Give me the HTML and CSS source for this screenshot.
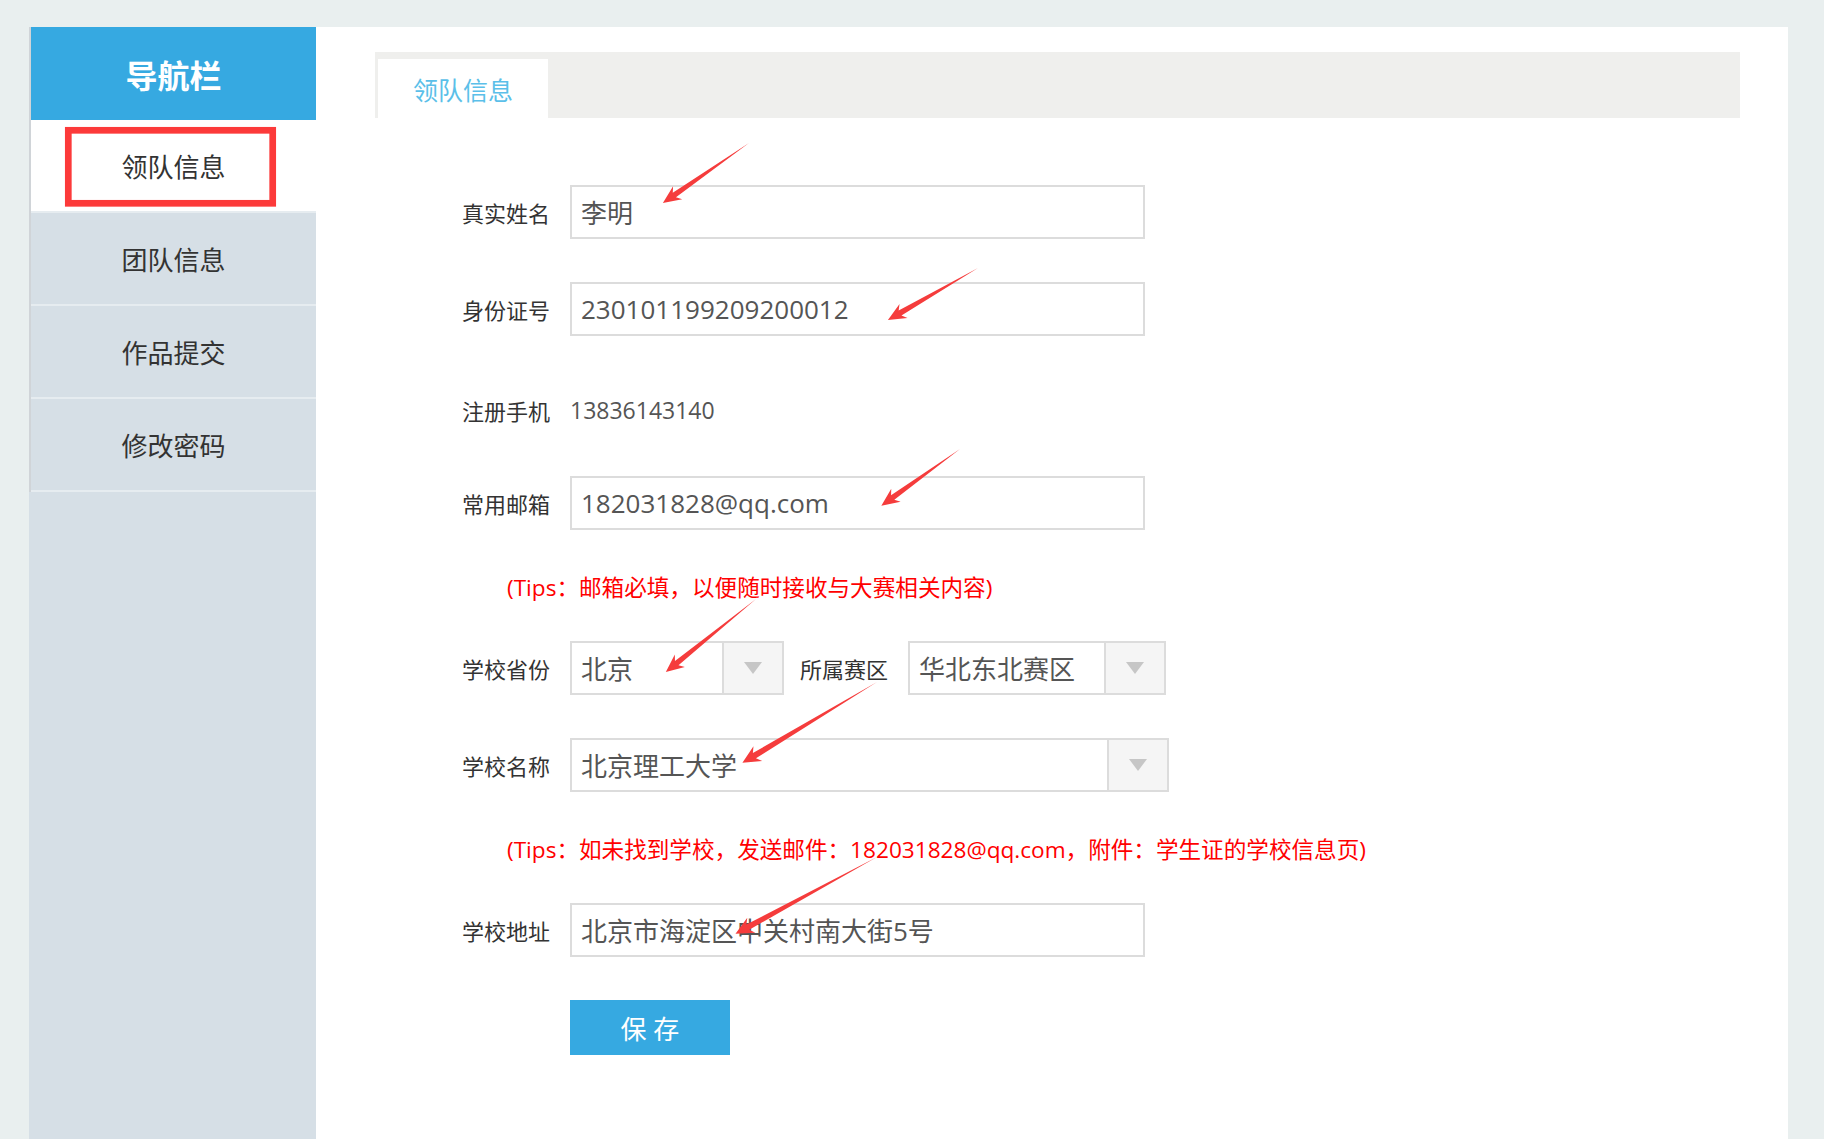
FILE: index.html
```html
<!DOCTYPE html>
<html lang="zh-CN">
<head>
    <meta charset="UTF-8">
    <title>领队信息</title>
    <link rel="stylesheet" href="styles.css">
</head>
<body>
    <div class="page">
        <div class="sidebar">
            <div class="nav">
                <div class="nav-head">导航栏</div>
                <div class="nav-item active">领队信息</div>
                <div class="nav-item">团队信息</div>
                <div class="nav-item">作品提交</div>
                <div class="nav-item">修改密码</div>
            </div>
        </div>

        <div class="main">
            <div class="tabs">
                <div class="tab">领队信息</div>
            </div>

            <div class="form">
                <div class="row">
                    <span class="label">真实姓名</span>
                    <input class="text-input" type="text" value="李明">
                </div>
                <div class="row">
                    <span class="label">身份证号</span>
                    <input class="text-input" type="text" value="230101199209200012">
                </div>
                <div class="row row-static">
                    <span class="label">注册手机</span>
                    <span class="plain">13836143140</span>
                </div>
                <div class="row">
                    <span class="label">常用邮箱</span>
                    <input class="text-input" type="text" value="182031828@qq.com">
                </div>
                <div class="tips">(Tips：邮箱必填，以便随时接收与大赛相关内容)</div>
                <div class="row">
                    <span class="label">学校省份</span>
                    <div class="select province">
                        <span class="select-value">北京</span>
                        <span class="select-btn"><i class="arrow-down"></i></span>
                    </div>
                    <span class="label zone-label">所属赛区</span>
                    <div class="select zone">
                        <span class="select-value">华北东北赛区</span>
                        <span class="select-btn"><i class="arrow-down"></i></span>
                    </div>
                </div>
                <div class="row">
                    <span class="label">学校名称</span>
                    <div class="select school">
                        <span class="select-value">北京理工大学</span>
                        <span class="select-btn"><i class="arrow-down"></i></span>
                    </div>
                </div>
                <div class="tips">(Tips：如未找到学校，发送邮件：182031828@qq.com，附件：学生证的学校信息页)</div>
                <div class="row">
                    <span class="label">学校地址</span>
                    <input class="text-input" type="text" value="北京市海淀区中关村南大街5号">
                </div>
                <button class="save-btn">保 存</button>
            </div>
        </div>
    </div>

    <!-- 标注：红框和箭头 -->
    <svg class="marks" width="1824" height="1139" viewBox="0 0 1824 1139">
        <rect x="68.3" y="130.3" width="204.4" height="73" fill="none" stroke="#fc3a3a" stroke-width="6.7"/>
        <g fill="#f53c3c">
            <polygon transform="translate(749,143) rotate(145.1)" points="0,0 91,-2.8 87,-8 105,0 87,8 91,2.8"/>
            <polygon transform="translate(978,268) rotate(150)" points="0,0 90,-2.8 86,-8 104,0 86,8 90,2.8"/>
            <polygon transform="translate(960,449) rotate(144.2)" points="0,0 83,-2.8 79,-8 97,0 79,8 83,2.8"/>
            <polygon transform="translate(756,599) rotate(141)" points="0,0 102,-2.8 98,-8 116,0 98,8 102,2.8"/>
            <polygon transform="translate(877,682) rotate(149)" points="0,0 143,-3 139,-8.5 157,0 139,8.5 143,3"/>
            <polygon transform="translate(877,857) rotate(151.5)" points="0,0 147,-3 143,-8.5 161,0 143,8.5 147,3"/>
        </g>
    </svg>
</body>
</html>
```

FILE: styles.css
```css
body {
    margin: 0;
    background-color: #e9efef;
    font-family: "Open Sans", "Noto Sans CJK SC", sans-serif;
    position: relative;
    overflow: hidden;
}

.page {
    display: flex;
    margin: 27px 36px 0 29px;
    height: 1112px;
}

.sidebar {
    width: 287px;
    flex-shrink: 0;
    background-color: #d6dfe6;
}

.nav {
    border-left: 2px solid #d0d4d8;
}

.nav-head {
    height: 93px;
    background-color: #36a9e1;
    color: white;
    font-size: 32px;
    font-weight: bold;
    display: flex;
    align-items: center;
    justify-content: center;
}

.nav-item {
    height: 91px;
    border-bottom: 2px solid #e6ecf0;
    display: flex;
    align-items: center;
    justify-content: center;
    font-size: 26px;
    color: #333;
}

.nav-item.active {
    background-color: white;
}

.main {
    flex: 1;
    background-color: white;
    padding: 25px 48px 0 59px;
}

.tabs {
    height: 66px;
    box-sizing: border-box;
    padding: 7px 0 0 3px;
    background-color: #efefed;
    display: flex;
}

.tab {
    width: 170px;
    background-color: white;
    color: #5bbfe9;
    font-size: 25px;
    display: flex;
    align-items: center;
    justify-content: center;
}

.form {
    margin-top: 67px;
    padding-left: 87px;
}

.row {
    display: flex;
    align-items: center;
    height: 54px;
    margin-bottom: 43px;
}

.row-static {
    box-sizing: border-box;
    padding-top: 7px;
}

.label {
    width: 88px;
    margin-right: 20px;
    font-size: 22px;
    color: #333;
    text-align: right;
    white-space: nowrap;
}

.text-input {
    width: 575px;
    height: 54px;
    box-sizing: border-box;
    border: 2px solid #dcdcdc;
    padding: 0 9px;
    font-family: "Open Sans", "Noto Sans CJK SC", sans-serif;
    font-size: 26px;
    color: #555;
    outline: none;
}

.plain {
    font-size: 23px;
    color: #555;
}

.tips {
    margin: 0 0 38px 45px;
    font-size: 22.6px;
    line-height: 30px;
    color: #ff0000;
}

.select {
    display: flex;
    height: 54px;
    box-sizing: border-box;
    border: 2px solid #dcdcdc;
}

.select-value {
    flex: 1;
    display: flex;
    align-items: center;
    padding: 0 9px;
    font-size: 26px;
    color: #555;
}

.select-btn {
    width: 58px;
    border-left: 2px solid #dcdcdc;
    background-color: #f5f5f5;
    display: flex;
    align-items: center;
    justify-content: center;
}

.arrow-down {
    width: 0;
    height: 0;
    border-left: 9px solid transparent;
    border-right: 9px solid transparent;
    border-top: 12px solid #c6c6c6;
}

.province {
    width: 214px;
}

.zone-label {
    margin-left: 16px;
}

.zone {
    width: 258px;
}

.school {
    width: 599px;
}

.save-btn {
    margin-left: 108px;
    width: 160px;
    height: 55px;
    border: none;
    background-color: #36a9e1;
    color: white;
    font-family: "Open Sans", "Noto Sans CJK SC", sans-serif;
    font-size: 26px;
    padding: 0;
}

.marks {
    position: absolute;
    top: 0;
    left: 0;
    pointer-events: none;
}
```
